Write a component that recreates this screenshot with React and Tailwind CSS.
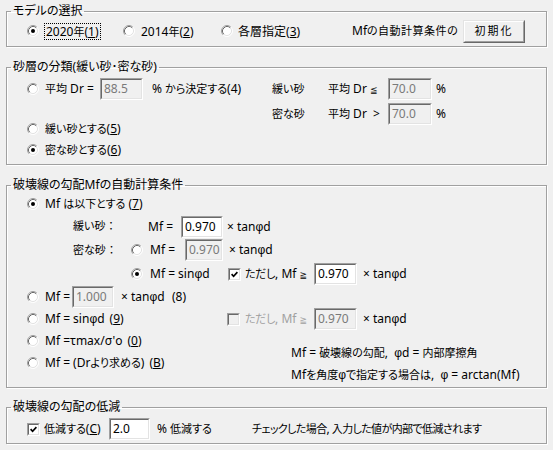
import React from "react";

const J = ({ children, className = "" }) => <span className={`text-[11px] ${className}`}>{children}</span>;
const K = ({ children, className = "" }) => <span className={`text-[12px] ${className}`}>{children}</span>;
const P = () => <span className="font-['Liberation_Sans',sans-serif]">φ</span>;

const Radio = ({ checked }) => (
  <svg width="12" height="12" viewBox="0 0 12 12" className="shrink-0">
    <circle cx="6" cy="6" r="5" fill="#fff" />
    <path d="M2.11 9.89A5.5 5.5 0 0 1 9.89 2.11" fill="none" stroke="#a0a0a0" />
    <path d="M9.89 2.11A5.5 5.5 0 0 1 2.11 9.89" fill="none" stroke="#ffffff" />
    <path d="M2.82 9.18A4.5 4.5 0 0 1 9.18 2.82" fill="none" stroke="#696969" />
    <path d="M9.18 2.82A4.5 4.5 0 0 1 2.82 9.18" fill="none" stroke="#e3e3e3" />
    {checked && <circle cx="6" cy="6" r="2" fill="#000" />}
  </svg>
);

const Check = ({ checked, disabled }) => (
  <div className="w-[13px] h-[13px] shrink-0 border border-t-[#a0a0a0] border-l-[#a0a0a0] border-b-white border-r-white">
    <div
      className={`w-full h-full border border-t-[#696969] border-l-[#696969] border-b-[#e3e3e3] border-r-[#e3e3e3] flex items-center justify-center ${
        disabled ? "bg-[#f0f0f0]" : "bg-white"
      }`}
    >
      {checked && (
        <svg width="7" height="7" viewBox="0 0 7 7">
          <path d="M0.6 3.2 L2.6 5.3 L6.4 1.2" fill="none" stroke="#000" strokeWidth="1.7" />
        </svg>
      )}
    </div>
  </div>
);

const Edit = ({ value, w, disabled }) => (
  <div className={`${w} h-[22px] shrink-0 border border-t-[#a0a0a0] border-l-[#a0a0a0] border-b-white border-r-white`}>
    <div
      className={`h-full border border-t-[#696969] border-l-[#696969] border-b-[#e3e3e3] border-r-[#e3e3e3] pl-[2px] leading-[18px] ${
        disabled ? "bg-[#f0f0f0] text-[#7a7a7a]" : "bg-white text-black"
      }`}
    >
      {value}
    </div>
  </div>
);

const Group = ({ title, h, className = "", children }) => (
  <fieldset
    className={`${h} ${className} border border-[#a0a0a0] shadow-[inset_1px_1px_0_#ffffff,1px_1px_0_#ffffff] m-0 p-0`}
  >
    <legend className="ml-[4px] px-[2px] leading-[16px] text-black">{title}</legend>
    {children}
  </fieldset>
);

const Tadashi = () => (
  <>
    <J className="tracking-[-0.3px]">ただし</J>, Mf <span className="text-[9px] font-['DejaVu_Sans','Noto_Sans_CJK_JP',sans-serif]">≧</span>
  </>
);

export default function App() {
  return (
    <div className="w-[553px] h-[450px] bg-[#f0f0f0] px-[6px] pt-[3px] text-[12px] text-black whitespace-nowrap font-['Noto_Sans','Noto_Sans_CJK_JP',sans-serif] [font-feature-settings:'palt'] overflow-hidden">
      <Group title={<K>モデルの選択</K>} h="h-[44px]">
        <div className="flex items-center h-[24px] pl-[20px]">
          <div className="w-[96px] flex items-center shrink-0">
            <Radio checked />
            <span className="ml-[5px] border border-dotted border-black px-[1px] leading-[15px]">
              2020<J>年</J>(<u>1</u>)
            </span>
          </div>
          <div className="w-[98px] flex items-center shrink-0">
            <Radio />
            <span className="ml-[6px] leading-[15px]">
              2014<J>年</J>(<u>2</u>)
            </span>
          </div>
          <div className="w-[131px] flex items-center shrink-0">
            <Radio />
            <span className="ml-[5px] leading-[15px]">
              <K>各層指定</K>(<u>3</u>)
            </span>
          </div>
          <span className="w-[111px] shrink-0">
            Mf<J className="tracking-[0.5px]">の自動計算条件の</J>
          </span>
          <div className="w-[62px] h-[23px] shrink-0 border border-t-[#e3e3e3] border-l-[#e3e3e3] border-b-[#696969] border-r-[#696969]">
            <div className="w-full h-full border border-t-white border-l-white border-b-[#a0a0a0] border-r-[#a0a0a0] bg-[#f0f0f0] flex items-center justify-center">
              <J className="tracking-[2px]">初期化</J>
            </div>
          </div>
        </div>
      </Group>

      <Group title={<K>砂層の分類(緩い砂･密な砂)</K>} h="h-[106px]" className="mt-[12px]">
        <div className="flex">
          <div className="w-[265px] shrink-0">
            <div className="mt-[3px] h-[22px] flex items-center pl-[20px]">
              <Radio />
              <span className="ml-[6px] w-[55px] shrink-0">
                <J>平均</J> Dr =
              </span>
              <Edit value="88.5" w="w-[43px]" disabled />
              <span className="ml-[9px]">
                % <J>から決定する</J>(4)
              </span>
            </div>
            <div className="mt-[18px] h-[21px] flex items-center pl-[20px]">
              <Radio />
              <span className="ml-[6px]">
                <J>緩い砂とする</J>(<u>5</u>)
              </span>
            </div>
            <div className="h-[21px] flex items-center pl-[20px]">
              <Radio checked />
              <span className="ml-[6px]">
                <J>密な砂とする</J>(<u>6</u>)
              </span>
            </div>
          </div>
          <div>
            <div className="mt-[3px] h-[22px] flex items-center">
              <J className="w-[56px] shrink-0">緩い砂</J>
              <span className="w-[60px] shrink-0">
                <J>平均</J> Dr <span className="text-[9px] font-['DejaVu_Sans','Noto_Sans_CJK_JP',sans-serif]">≦</span>
              </span>
              <Edit value="70.0" w="w-[44px]" disabled />
              <span className="ml-[4px]">%</span>
            </div>
            <div className="mt-[3px] h-[22px] flex items-center">
              <J className="w-[56px] shrink-0">密な砂</J>
              <span className="w-[60px] shrink-0">
                <J>平均</J> Dr &nbsp;&gt;
              </span>
              <Edit value="70.0" w="w-[44px]" disabled />
              <span className="ml-[4px]">%</span>
            </div>
          </div>
        </div>
      </Group>

      <Group title={<K>破壊線の勾配Mfの自動計算条件</K>} h="h-[211px]" className="mt-[12px]">
        <div className="h-[22px] flex items-center pl-[20px]">
          <Radio checked />
          <span className="ml-[6px]">
            Mf <J>は以下とする</J> (<u>7</u>)
          </span>
        </div>
        <div className="h-[23px] flex items-center pl-[66px]">
          <J className="w-[75px] shrink-0">緩い砂 ：</J>
          <span className="w-[33px] shrink-0">Mf =</span>
          <Edit value="0.970" w="w-[42px]" />
          <span className="ml-[4px]">
            × tan<P />d
          </span>
        </div>
        <div className="h-[24px] flex items-center pl-[66px]">
          <J className="w-[58px] shrink-0">密な砂 ：</J>
          <Radio />
          <span className="ml-[7px] w-[35px] shrink-0">Mf =</span>
          <Edit value="0.970" w="w-[38px]" disabled />
          <span className="ml-[6px]">
            × tan<P />d
          </span>
        </div>
        <div className="h-[24px] flex items-center pl-[124px]">
          <Radio checked />
          <span className="ml-[7px] w-[78px] shrink-0">
            Mf = sin<P />d
          </span>
          <Check checked />
          <span className="ml-[4px] w-[69px] shrink-0">
            <Tadashi />
          </span>
          <Edit value="0.970" w="w-[43px]" />
          <span className="ml-[6px]">
            × tan<P />d
          </span>
        </div>
        <div className="flex">
          <div className="w-[220px] shrink-0 pl-[20px]">
            <div className="h-[22px] flex items-center">
              <Radio />
              <span className="ml-[6px] w-[27px] shrink-0">Mf =</span>
              <Edit value="1.000" w="w-[42px]" disabled />
              <span className="ml-[7px] w-[51px] shrink-0">
                × tan<P />d
              </span>
              <span>(8)</span>
            </div>
            <div className="h-[22px] flex items-center">
              <Radio />
              <span className="ml-[6px]">
                Mf = sin<P />d
              </span>
              <span className="ml-[5px]">
                (<u>9</u>)
              </span>
            </div>
            <div className="h-[22px] flex items-center">
              <Radio />
              <span className="ml-[6px]">Mf =τmax/σ'o</span>
              <span className="ml-[5px]">
                (<u>0</u>)
              </span>
            </div>
            <div className="h-[22px] flex items-center">
              <Radio />
              <span className="ml-[6px]">
                Mf = (Dr<J>より求める</J>)
              </span>
              <span className="ml-[5px]">
                (<u>B</u>)
              </span>
            </div>
          </div>
          <div>
            <div className="h-[22px]" />
            <div className="h-[22px] flex items-center">
              <Check disabled />
              <span className="ml-[5px] w-[69px] shrink-0 text-[#a0a0a0]">
                <Tadashi />
              </span>
              <Edit value="0.970" w="w-[43px]" disabled />
              <span className="ml-[6px]">
                × tan<P />d
              </span>
            </div>
            <div className="mt-[12px] h-[22px] flex items-center pl-[64px]">
              <span>
                Mf = <J>破壊線の勾配</J>,&nbsp; <P />d = <J>内部摩擦角</J>
              </span>
            </div>
            <div className="h-[22px] flex items-center pl-[64px]">
              <span>
                Mf<J>を角度</J>
                <P />
                <J>で指定する場合は</J>,&nbsp; <P /> = arctan(Mf)
              </span>
            </div>
          </div>
        </div>
      </Group>

      <Group title={<K>破壊線の勾配の低減</K>} h="h-[45px]" className="mt-[11px]">
        <div className="mt-[3px] h-[22px] flex items-center pl-[20px]">
          <Check checked />
          <span className="ml-[4px] w-[65px] shrink-0">
            <J>低減する</J>(<u>C</u>)
          </span>
          <Edit value="2.0" w="w-[41px]" />
          <span className="ml-[7px] w-[95px] shrink-0">
            % <J>低減する</J>
          </span>
          <span className="tracking-[-0.6px]">
            <J>チェックした場合</J>, <J>入力した値が内部で低減されます</J>
          </span>
        </div>
      </Group>
    </div>
  );
}
